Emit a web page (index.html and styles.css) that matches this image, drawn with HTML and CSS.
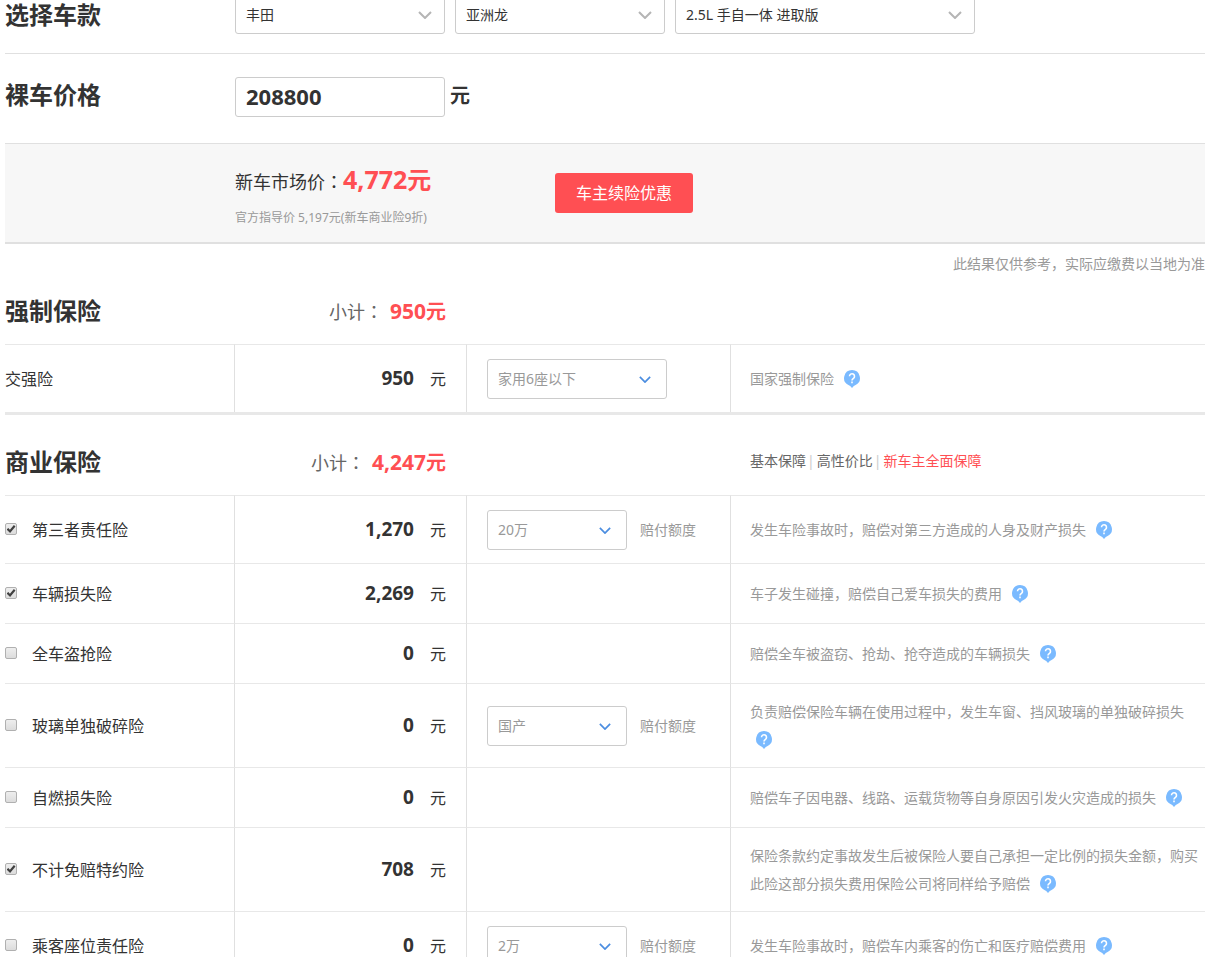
FILE: index.html
```
<!DOCTYPE html>
<html lang="zh-CN">
<head>
<meta charset="utf-8">
<title>车险计算器</title>
<link rel="stylesheet" href="styles.css">
</head>
<body>
<svg class="sprite" aria-hidden="true">
  <symbol id="chevron" viewBox="0 0 14 8"><path d="M1 1l6 6 6-6" fill="none" stroke="currentColor" stroke-width="2"/></symbol>
  <symbol id="help" viewBox="0 0 16 18"><path d="M8 0a8 8 0 0 1 3.6 15.1L9.8 15.9 8 18 6.200 15.900 4.400 15.100A8 8 0 0 1 8 0z" fill="#7abaff"/><path d="M5.500 6.300a2.500 2.500 0 1 1 4 2C8.400 9.100 8 9.400 8 10.500" fill="none" stroke="#fff" stroke-width="1.600"/><path d="M7.200 11.600h1.600v1.600H7.200z" fill="#fff"/></symbol>
</svg>
<main class="page">
  <section class="field-row car-row">
    <h2 class="title">选择车款</h2>
    <div class="car-selects">
      <span class="select"><select aria-label="品牌"><option>丰田</option></select><svg class="chevron"><use href="#chevron"/></svg></span>
      <span class="select"><select aria-label="车系"><option>亚洲龙</option></select><svg class="chevron"><use href="#chevron"/></svg></span>
      <span class="select select-wide"><select aria-label="车型"><option>2.5L 手自一体 进取版</option></select><svg class="chevron"><use href="#chevron"/></svg></span>
    </div>
  </section>
  <section class="field-row price-row">
    <h2 class="title"><label for="price">裸车价格</label></h2>
    <input class="price-input" id="price" type="text" value="208800">
    <span class="price-unit">元</span>
  </section>
  <section class="summary">
    <div class="quote">
      <p class="market"><span class="label">新车市场价<span lang="zh-TW">：</span></span><strong class="red"><span class="num">4,772</span>元</strong></p>
      <p class="guide">官方指导价 5,197元(新车商业险9折)</p>
    </div>
    <button class="renew" type="button">车主续险优惠</button>
  </section>
  <p class="note">此结果仅供参考，实际应缴费以当地为准</p>

  <header class="group-head">
    <h2 class="title">强制保险</h2>
    <p class="subtotal"><span class="label">小计<span lang="zh-TW">：</span></span><strong class="red"><span class="num">950</span>元</strong></p>
  </header>
  <table class="plans plans-last">
    <colgroup><col class="c-name"><col class="c-cost"><col class="c-option"><col></colgroup>
    <tr>
      <td>交强险</td>
      <td class="cost"><b>950</b>元</td>
      <td class="option"><span class="select blue select-seat"><select aria-label="座位数"><option>家用6座以下</option></select><svg class="chevron"><use href="#chevron"/></svg></span></td>
      <td class="desc">国家强制保险 <svg class="help"><use href="#help"/></svg></td>
    </tr>
  </table>

  <header class="group-head group-second">
    <h2 class="title">商业保险</h2>
    <p class="subtotal"><span class="label">小计<span lang="zh-TW">：</span></span><strong class="red"><span class="num">4,247</span>元</strong></p>
    <nav class="presets"><a href="#">基本保障</a><i>|</i><a href="#">高性价比</a><i>|</i><a href="#" class="active">新车主全面保障</a></nav>
  </header>
  <table class="plans">
    <colgroup><col class="c-name"><col class="c-cost"><col class="c-option"><col></colgroup>
    <tr>
      <td><label class="pick"><input type="checkbox" checked>第三者责任险</label></td>
      <td class="cost"><b>1,270</b>元</td>
      <td class="option"><span class="select blue"><select aria-label="第三者责任险赔付额度"><option>20万</option></select><svg class="chevron"><use href="#chevron"/></svg></span><span class="limit">赔付额度</span></td>
      <td class="desc">发生车险事故时，赔偿对第三方造成的人身及财产损失 <svg class="help"><use href="#help"/></svg></td>
    </tr>
    <tr>
      <td><label class="pick"><input type="checkbox" checked>车辆损失险</label></td>
      <td class="cost"><b>2,269</b>元</td>
      <td class="option"></td>
      <td class="desc">车子发生碰撞，赔偿自己爱车损失的费用 <svg class="help"><use href="#help"/></svg></td>
    </tr>
    <tr>
      <td><label class="pick"><input type="checkbox">全车盗抢险</label></td>
      <td class="cost"><b>0</b>元</td>
      <td class="option"></td>
      <td class="desc">赔偿全车被盗窃、抢劫、抢夺造成的车辆损失 <svg class="help"><use href="#help"/></svg></td>
    </tr>
    <tr>
      <td><label class="pick"><input type="checkbox">玻璃单独破碎险</label></td>
      <td class="cost"><b>0</b>元</td>
      <td class="option"><span class="select blue"><select aria-label="玻璃产地"><option>国产</option></select><svg class="chevron"><use href="#chevron"/></svg></span><span class="limit">赔付额度</span></td>
      <td class="desc">负责赔偿保险车辆在使用过程中，发生车窗、挡风玻璃的单独破碎损失 <svg class="help"><use href="#help"/></svg></td>
    </tr>
    <tr>
      <td><label class="pick"><input type="checkbox">自燃损失险</label></td>
      <td class="cost"><b>0</b>元</td>
      <td class="option"></td>
      <td class="desc">赔偿车子因电器、线路、运载货物等自身原因引发火灾造成的损失 <svg class="help"><use href="#help"/></svg></td>
    </tr>
    <tr>
      <td><label class="pick"><input type="checkbox" checked>不计免赔特约险</label></td>
      <td class="cost"><b>708</b>元</td>
      <td class="option"></td>
      <td class="desc">保险条款约定事故发生后被保险人要自己承担一定比例的损失金额，购买此险这部分损失费用保险公司将同样给予赔偿 <svg class="help"><use href="#help"/></svg></td>
    </tr>
    <tr>
      <td><label class="pick"><input type="checkbox">乘客座位责任险</label></td>
      <td class="cost"><b>0</b>元</td>
      <td class="option"><span class="select blue"><select aria-label="乘客座位责任险赔付额度"><option>2万</option></select><svg class="chevron"><use href="#chevron"/></svg></span><span class="limit">赔付额度</span></td>
      <td class="desc">发生车险事故时，赔偿车内乘客的伤亡和医疗赔偿费用 <svg class="help"><use href="#help"/></svg></td>
    </tr>
  </table>
</main>
</body>
</html>
```

FILE: styles.css
```
* { box-sizing: border-box; }
body {
  margin: 0;
  height: 100vh;
  overflow: hidden;
  background: #fff;
  color: #333;
  font: 16px/28px "Noto Sans", "Noto Sans CJK SC", sans-serif;
}
h2, p { margin: 0; }
.sprite { display: none; }
.page { margin: -6px 2px 0 5px; }
.title { font-size: 24px; line-height: 40px; font-weight: 700; }
.red { color: #ff4f53; font-weight: 700; }
.label { font-weight: 400; }
.label [lang] { font-family: "Noto Sans CJK TC", sans-serif; line-height: 1; }

.field-row { display: grid; grid-template-columns: 230px auto 1fr; align-items: start; }
.car-row { border-bottom: 1px solid #e0e0e0; padding-bottom: 19px; }
.car-row .title { line-height: 42px; height: 40px; }
.car-selects { display: flex; gap: 10px; }
.price-row { padding: 23px 0 26px; }
.price-row .title { line-height: 36px; }

.select { position: relative; display: inline-block; width: 210px; height: 40px; vertical-align: middle; color: #b5b5b5; }
.select select {
  appearance: none;
  width: 100%;
  height: 40px;
  margin: 0;
  padding: 0 36px 0 10px;
  border: 1px solid #ccc;
  border-radius: 3px;
  background: #fff;
  color: #333;
  font: 14px/20px "Noto Sans", "Noto Sans CJK SC", sans-serif;
}
.car-selects select { padding-top: 2px; }
.select-wide { width: 300px; }
.chevron { position: absolute; right: 13px; top: 17px; width: 14px; height: 8px; pointer-events: none; }
.blue { width: 140px; color: #4b8de0; }
.blue select { color: #999; }
.blue .chevron { right: 16px; width: 12px; height: 7px; }
.select-seat { width: 180px; }

.price-input {
  width: 210px;
  height: 40px;
  padding: 0 10px 2px;
  border: 1px solid #ccc;
  border-radius: 3px;
  color: #333;
  font: 700 22px/36px "Noto Sans", sans-serif;
}
.price-unit { padding-left: 5px; font-size: 20px; line-height: 38px; font-weight: 700; }

.summary {
  display: grid;
  grid-template-columns: 320px auto;
  justify-content: start;
  padding: 18px 0 10px 230px;
  border-top: 1px solid #e0e0e0;
  border-bottom: 2px solid #e0e0e0;
  background: #f7f7f7;
}
.market { display: flex; align-items: baseline; height: 36px; font-size: 24px; line-height: 36px; }
.market .label { font-size: 18px; }
.market .num { font-size: 25px; line-height: 1; }
.guide { margin-top: 6px; color: #999; font-size: 12px; line-height: 28px; }
.renew {
  width: 138px;
  height: 40px;
  margin-top: 11px;
  padding: 0;
  border: 0;
  border-radius: 3px;
  background: #ff4f53;
  color: #fff;
  font: 16px/40px "Noto Sans", "Noto Sans CJK SC", sans-serif;
}
.note { color: #999; font-size: 14px; line-height: 40px; text-align: right; }

.group-head { display: grid; grid-template-columns: 230px 211px auto; padding-bottom: 6px; }
.group-head .title, .subtotal { height: 54px; line-height: 54px; }
.group-second { padding-top: 20px; }
.subtotal { text-align: right; font-size: 20px; }
.subtotal .label { margin-right: 7px; color: #666; font-size: 18px; }
.subtotal .num { font-size: 21px; }
.presets { padding-left: 304px; font-size: 14px; line-height: 52px; }
.presets a { color: #666; text-decoration: none; }
.presets i { margin: 0 2px 0 1px; color: #ccc; font-style: normal; }
.presets .active { color: #ff4f53; }

.plans { width: 100%; table-layout: fixed; border-collapse: separate; border-spacing: 0; }
.plans-last { border-bottom: 3px solid #e8e8e8; }
.c-name { width: 230px; }
.c-cost { width: 232px; }
.c-option { width: 264px; }
.plans td { height: 60px; padding: 14px 0 13px; border-top: 1px solid #e8e8e8; border-right: 1px solid #e0e0e0; vertical-align: middle; }
.plans .cost { padding-right: 20px; text-align: right; }
.cost b { margin-right: 16px; font-size: 19px; line-height: 1; }
.plans .option { padding-left: 20px; line-height: 20px; }
.limit { margin-left: 13px; color: #999; font-size: 14px; vertical-align: middle; }
.plans .desc { padding-left: 19px; border-right: 0; color: #999; font-size: 14px; }
.help { width: 16px; height: 18px; margin-left: 6px; vertical-align: -4px; }

.pick { display: flex; align-items: center; }
.pick input {
  appearance: none;
  display: grid;
  place-items: center;
  width: 12px;
  height: 12px;
  margin: 0 15px 2px 0;
  border: 1px solid #b0b0b0;
  border-radius: 2px;
  background: linear-gradient(#eee, #dcdcdc);
}
.pick input:checked::before {
  content: "";
  width: 9px;
  height: 8px;
  background: #404040;
  clip-path: polygon(0 55%, 20% 38%, 38% 58%, 82% 0, 100% 18%, 40% 100%);
}
```
